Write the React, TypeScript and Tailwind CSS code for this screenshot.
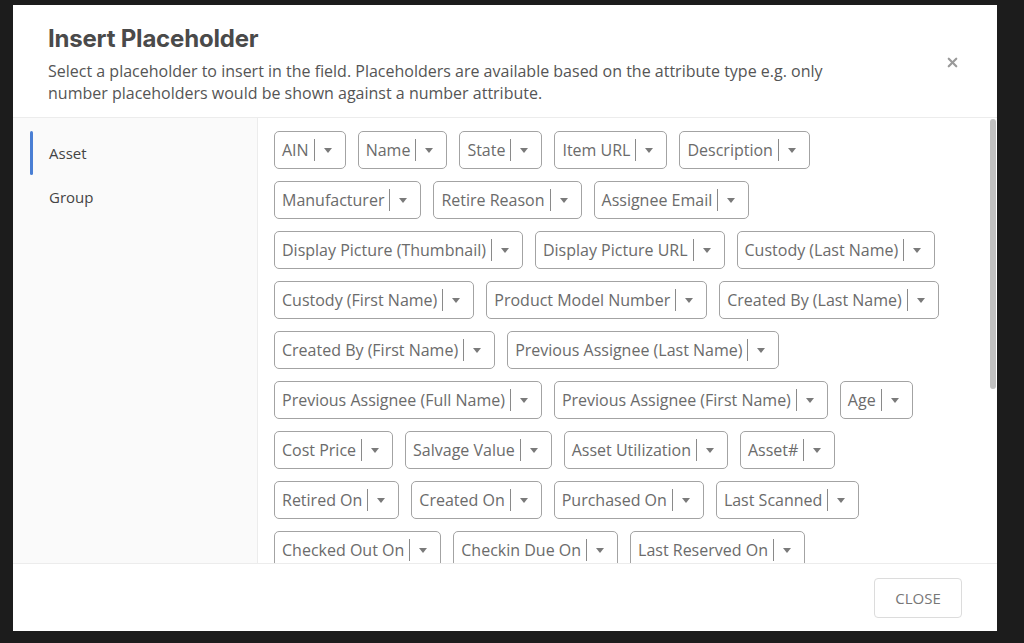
import { X } from 'lucide-react'

const rows: string[][] = [
  ['AIN', 'Name', 'State', 'Item URL', 'Description'],
  ['Manufacturer', 'Retire Reason', 'Assignee Email'],
  ['Display Picture (Thumbnail)', 'Display Picture URL', 'Custody (Last Name)'],
  ['Custody (First Name)', 'Product Model Number', 'Created By (Last Name)'],
  ['Created By (First Name)', 'Previous Assignee (Last Name)'],
  ['Previous Assignee (Full Name)', 'Previous Assignee (First Name)', 'Age'],
  ['Cost Price', 'Salvage Value', 'Asset Utilization', 'Asset#'],
  ['Retired On', 'Created On', 'Purchased On', 'Last Scanned'],
  ['Checked Out On', 'Checkin Due On', 'Last Reserved On'],
]

function Chip({ label }: { label: string }) {
  return (
    <button className="flex h-[38px] shrink-0 items-center rounded-[5px] border border-[#a3a3a3] bg-white pl-[7px] pr-[13px] text-[16px] text-[#6b6b6b]">
      <span className="whitespace-nowrap">{label}</span>
      <span className="ml-[5px] h-[22px] w-px bg-[#8a8a8a]" />
      <svg className="ml-[9px]" width="8" height="5" viewBox="0 0 8 5">
        <path d="M0 0 L8 0 L4 5 Z" fill="#7a7a7a" />
      </svg>
    </button>
  )
}

export default function App() {
  return (
    <div
      className="min-h-[643px] bg-[#1c1c1c] pl-[13px] pt-[5px]"
      style={{ fontFamily: '"Open Sans", "Liberation Sans", sans-serif' }}
    >
      <div className="flex h-[626px] w-[984px] flex-col bg-white">
        {/* header */}
        <div className="relative h-[113px] shrink-0 border-b border-[#ececec] pl-[35px] pt-[19px]">
          <h1
            className="text-[24px] font-bold leading-[30px] tracking-[-0.2px] text-[#4a4a4a]"
            style={{ fontFamily: 'Inter, "Liberation Sans", sans-serif' }}
          >
            Insert Placeholder
          </h1>
          <p className="mt-[6px] w-[800px] text-[16px] leading-[22px] text-[#555]">
            Select a placeholder to insert in the field. Placeholders are available based on the attribute type e.g. only
            number placeholders would be shown against a number attribute.
          </p>
          <button className="absolute right-[37px] top-[50px] text-[#9a9a9a]">
            <X size={15} strokeWidth={3.5} />
          </button>
        </div>

        {/* body */}
        <div className="flex min-h-0 flex-1">
          <div className="w-[245px] shrink-0 border-r border-[#ececec] bg-[#fafafa] pt-[13px]">
            <div className="flex h-[44px] items-center pl-[17px]">
              <span className="h-full w-[3px] rounded-full bg-[#4a7fd4]" />
              <span className="ml-[16px] text-[15px] text-[#444]">Asset</span>
            </div>
            <div className="flex h-[45px] items-center pl-[36px] text-[15px] text-[#444]">Group</div>
          </div>
          <div className="relative min-w-0 flex-1 overflow-hidden pl-[16px] pt-[13px]">
            <div className="flex flex-col gap-[12px]">
              {rows.map((row, i) => (
                <div key={i} className="flex gap-[12px]">
                  {row.map((label) => (
                    <Chip key={label} label={label} />
                  ))}
                </div>
              ))}
            </div>
            <div className="absolute right-[1px] top-[1px] h-[270px] w-[6px] rounded-full bg-[#c1c1c1]" />
          </div>
        </div>

        {/* footer */}
        <div className="flex h-[68px] shrink-0 items-start justify-end border-t border-[#ececec] pr-[35px] pt-[14px]">
          <button className="h-[40px] w-[88px] rounded-[4px] border border-[#dcdcdc] text-[15px] text-[#777]">CLOSE</button>
        </div>
      </div>
    </div>
  )
}
